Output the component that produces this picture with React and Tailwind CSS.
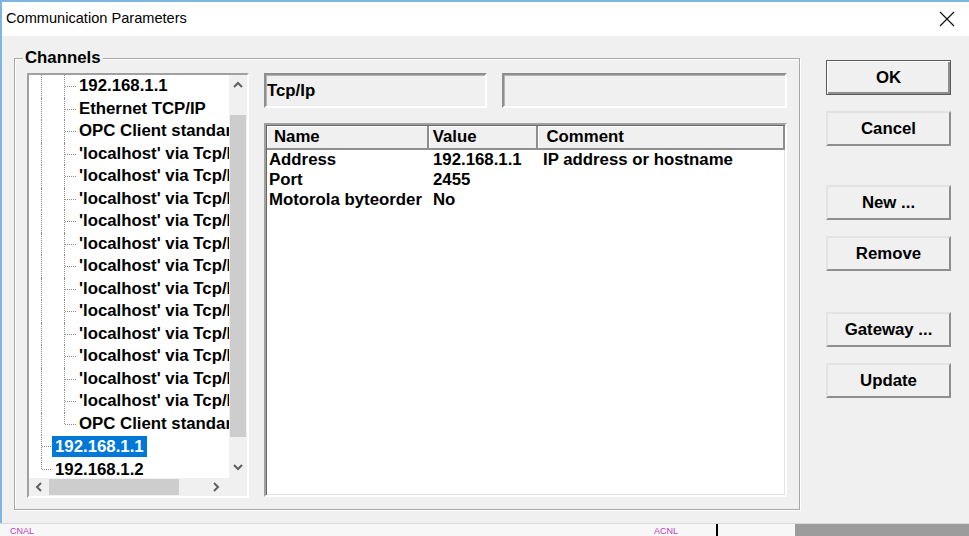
import React from "react"

const font = "font-['Liberation_Sans',Arial,sans-serif]"

const treeRows = [
  { text: "192.168.1.1", level: 2 },
  { text: "Ethernet TCP/IP", level: 2 },
  { text: "OPC Client standard", level: 2 },
  ...Array.from({ length: 12 }, () => ({ text: "'localhost' via Tcp/Ip", level: 2 })),
  { text: "OPC Client standard", level: 2, lastChild: true },
  { text: "192.168.1.1", level: 1, selected: true },
  { text: "192.168.1.2", level: 1, lastRoot: true },
]

const params = [
  { name: "Address", value: "192.168.1.1", comment: "IP address or hostname" },
  { name: "Port", value: "2455", comment: "" },
  { name: "Motorola byteorder", value: "No", comment: "" },
]

const buttons = [
  { label: "OK", def: true, mt: "mt-0" },
  { label: "Cancel", mt: "mt-[16px]" },
  { label: "New ...", mt: "mt-[39px]" },
  { label: "Remove", mt: "mt-[16px]" },
  { label: "Gateway ...", mt: "mt-[41px]" },
  { label: "Update", mt: "mt-[16px]" },
]

const TreeRow = ({ row }) => (
  <div className="relative h-[22.5px] shrink-0 whitespace-nowrap">
    {/* root connector */}
    <span
      className={`absolute left-[12px] top-0 border-l border-dotted border-[#8a8a8a] ${row.lastRoot ? "h-[11px]" : "h-full"}`}
    />
    {row.level === 2 ? (
      <>
        <span
          className={`absolute left-[35px] top-0 border-l border-dotted border-[#8a8a8a] ${row.lastChild ? "h-[11px]" : "h-full"}`}
        />
        <span className="absolute left-[36px] top-[11px] w-[11px] border-t border-dotted border-[#8a8a8a]" />
        <span className="absolute left-[50px] top-0 leading-[22.5px]">{row.text}</span>
      </>
    ) : (
      <>
        <span className="absolute left-[13px] top-[11px] w-[9px] border-t border-dotted border-[#8a8a8a]" />
        <span
          className={`absolute left-[23px] top-[1px] h-[21px] px-[3px] leading-[21px] ${row.selected ? "bg-[#0078d7] text-white" : ""}`}
        >
          {row.text}
        </span>
      </>
    )}
  </div>
)

const Chevron = ({ dir }) => (
  <svg width="12" height="10" viewBox="0 0 12 10">
    <polyline
      points={dir === "up" ? "2,7 6,3 10,7" : "2,3 6,7 10,3"}
      fill="none"
      stroke="#606060"
      strokeWidth="2"
    />
  </svg>
)

const HChevron = ({ dir }) => (
  <svg width="10" height="12" viewBox="0 0 10 12">
    <polyline
      points={dir === "left" ? "7,2 3,6 7,10" : "3,2 7,6 3,10"}
      fill="none"
      stroke="#606060"
      strokeWidth="2"
    />
  </svg>
)

const Tree = () => (
  <div className="flex h-[425px] w-[222px] shrink-0 flex-col border-2 border-t-[#a0a0a0] border-l-[#a0a0a0] border-r-white border-b-white shadow-[inset_1px_1px_0_#696969]">
    <div className="flex h-[403px] shrink-0">
      <div className="flex w-[200px] flex-col overflow-hidden bg-white text-[16.8px] font-bold text-black">
        {treeRows.map((row, i) => (
          <TreeRow key={i} row={row} />
        ))}
      </div>
      <div className="flex w-[18px] flex-col bg-[#f0f0f0]">
        <div className="flex h-[20px] items-center justify-center">
          <Chevron dir="up" />
        </div>
        <div className="h-[20px]" />
        <div className="mx-[1px] h-[322px] bg-[#cdcdcd]" />
        <div className="flex-1" />
        <div className="flex h-[22px] items-center justify-center">
          <Chevron dir="down" />
        </div>
      </div>
    </div>
    <div className="flex h-[18px] shrink-0 bg-[#f0f0f0]">
      <div className="flex w-[200px] items-center">
        <div className="flex w-[20px] justify-center">
          <HChevron dir="left" />
        </div>
        <div className="h-[16px] w-[130px] bg-[#cdcdcd]" />
        <div className="flex-1" />
        <div className="flex w-[26px] justify-center">
          <HChevron dir="right" />
        </div>
      </div>
      <div className="w-[18px]" />
    </div>
  </div>
)

const Field = ({ w, children }) => (
  <div
    className={`${w} flex h-[35px] items-center border-2 border-t-[#8e8e8e] border-l-[#8e8e8e] border-r-white border-b-white bg-[#f0f0f0] pl-[1px] shadow-[inset_1px_1px_0_#b5b5b5]`}
  >
    {children}
  </div>
)

const ParamList = () => (
  <div className="mt-[15px] flex h-[374px] flex-col border-2 border-t-[#a0a0a0] border-l-[#a0a0a0] border-r-white border-b-white bg-white shadow-[inset_1px_1px_0_#696969,inset_-1px_-1px_0_#e3e3e3]">
    <div className="flex h-[25px] shrink-0 pl-[1px] pt-[1px] text-[16.8px] font-bold">
      <div className="flex w-[162px] items-center border-b-2 border-r-2 border-[#8e8e8e] bg-[#f0f0f0] pl-[7px] shadow-[inset_1px_1px_0_white]">
        Name
      </div>
      <div className="flex w-[110px] items-center border-b-2 border-r-2 border-[#8e8e8e] bg-[#f0f0f0] pl-[4px] shadow-[inset_1px_1px_0_white]">
        Value
      </div>
      <div className="flex w-[247px] items-center border-b-2 border-r-2 border-[#8e8e8e] bg-[#f0f0f0] pl-[8px] shadow-[inset_1px_1px_0_white]">
        Comment
      </div>
    </div>
    <div className="flex flex-col pl-[3px] text-[16.8px] font-bold">
      {params.map((p) => (
        <div key={p.name} className="flex h-[20px] items-center whitespace-nowrap">
          <div className="w-[164px]">{p.name}</div>
          <div className="w-[110px]">{p.value}</div>
          <div>{p.comment}</div>
        </div>
      ))}
    </div>
  </div>
)

const Button = ({ b }) => (
  <div
    className={`${b.mt} flex h-[35px] w-[125px] items-center justify-center text-[16.8px] font-bold ${
      b.def
        ? "border border-[#5a5a5a] bg-[#f0f0f0] shadow-[inset_1px_1px_0_white,inset_-2px_-2px_0_#8e8e8e]"
        : "border-2 border-t-[#e3e3e3] border-l-[#e3e3e3] border-r-[#8e8e8e] border-b-[#8e8e8e] bg-[#f0f0f0]"
    }`}
  >
    {b.label}
  </div>
)

export default function App() {
  return (
    <div className={`${font} flex h-[536px] w-[969px] flex-col overflow-hidden bg-[#f0f0f0] text-black`}>
      <div className="flex h-[523px] shrink-0 flex-col border-l-2 border-t-2 border-[#7db4e0]">
        {/* title bar */}
        <div className="flex h-[34px] shrink-0 items-center justify-between bg-white pl-[4px] pr-[14px]">
          <span className="text-[14.6px]">Communication Parameters</span>
          <svg width="16" height="16" viewBox="0 0 16 16">
            <path d="M1 1 L15 15 M15 1 L1 15" stroke="#111" strokeWidth="1.2" />
          </svg>
        </div>

        <div className="flex flex-1 pl-[12px]">
          {/* group box */}
          <div className="relative mt-[22px] h-[452px] w-[786px] shrink-0 border border-[#a8a8a8] shadow-[inset_1px_1px_0_white,1px_1px_0_white]">
            <span className="absolute -top-[10px] left-[8px] bg-[#f0f0f0] px-[2px] text-[16.8px] font-bold leading-[18px]">
              Channels
            </span>
            <div className="flex pl-[12px] pt-[14px]">
              <Tree />
              <div className="ml-[15px] flex w-[523px] flex-col">
                <div className="flex gap-[15px]">
                  <Field w="w-[223px]">
                    <span className="text-[16.8px] font-bold">Tcp/Ip</span>
                  </Field>
                  <Field w="w-[285px]" />
                </div>
                <ParamList />
              </div>
            </div>
          </div>

          {/* buttons */}
          <div className="ml-[26px] mt-[24px] flex flex-col">
            {buttons.map((b) => (
              <Button key={b.label} b={b} />
            ))}
          </div>
        </div>
      </div>

      {/* background application strip */}
      <div className="flex flex-1 border-t border-[#d8d8d8]">
        <div className="flex w-[795px] items-end bg-[#f7f7f7]">
          <span className="ml-[10px] text-[9px] leading-[10px] text-[#c040c0]">CNAL</span>
          <span className="ml-[620px] text-[9px] leading-[10px] text-[#c040c0]">ACNL</span>
          <span className="ml-[38px] h-full w-[2px] bg-black" />
        </div>
        <div className="flex-1 bg-[#9c9c9c]" />
      </div>
    </div>
  )
}
